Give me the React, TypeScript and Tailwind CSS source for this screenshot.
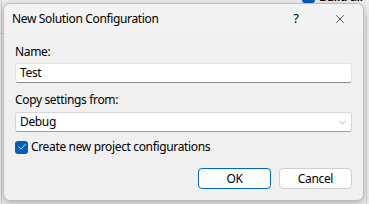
import { Check, ChevronDown, X } from 'lucide-react';

const font = { fontFamily: '"Noto Sans", "Open Sans", sans-serif' };

export default function App() {
    return (
        <div className="relative h-[204px] w-[369px] overflow-hidden bg-[#ebebeb] text-[12px] tracking-[-0.35px] text-black" style={font}>
            {/* window behind the dialog */}
            <div className="absolute left-[1px] top-0 h-full w-px bg-[#c9c9c9]" />
            <div className="absolute left-0 top-[33px] h-px w-[4px] bg-[#c9c9c9]" />
            <div className="absolute right-[2px] top-[16px] h-full w-px bg-[#d4d4d4]" />
            <div className="absolute -top-[10px] left-[302px] flex items-center gap-[4px]">
                <div className="size-[13px] rounded-[3px] bg-[#005fb8]" />
                <span className="leading-[13px] font-semibold">Build all</span>
            </div>

            {/* dialog */}
            <div className="absolute left-[3px] top-[3px] flex h-[198px] w-[361px] flex-col rounded-[7px] border border-[#bdbdbd] bg-[#f0f0f0] shadow-[0_2px_6px_rgba(0,0,0,0.25)]">
                <div className="flex h-[29px] shrink-0 items-center rounded-t-[7px] bg-[#f3f3f3] pl-[8px]">
                    <span className="flex-1">New Solution Configuration</span>
                    <span className="w-[46px] pl-[4px] text-center text-[13px]">?</span>
                    <div className="flex w-[46px] justify-center">
                        <X size={14} strokeWidth={1.1} />
                    </div>
                </div>

                <div className="flex flex-col px-[11px] pt-[11px]">
                    <label className="leading-[16px]">Name:</label>
                    <div className="mt-[3px] flex h-[20px] items-center rounded-[3px] border border-[#e3e3e3] border-b-[#8a8a8a] bg-white px-[4px]">
                        Test
                    </div>

                    <label className="mt-[9px] leading-[16px]">Copy settings from:</label>
                    <div className="mt-[4px] flex h-[20px] items-center justify-between rounded-[3px] border border-[#d6d6d6] border-b-[#a0a0a0] bg-white pl-[4px] pr-[3px]">
                        <span>Debug</span>
                        <ChevronDown size={11} strokeWidth={1.1} className="text-[#606060]" />
                    </div>

                    <div className="mt-[7px] flex items-center gap-[3px]">
                        <div className="flex size-[13px] items-center justify-center rounded-[3px] bg-[#005fb8]">
                            <Check size={10} strokeWidth={2} className="text-white" />
                        </div>
                        <span className="leading-[16px]">Create new project configurations</span>
                    </div>

                    <div className="mt-[13px] flex justify-end gap-[8px]">
                        <button className="h-[21px] w-[73px] rounded-[4px] border border-[#0067c0] bg-[#fdfdfd]">OK</button>
                        <button className="h-[21px] w-[73px] rounded-[4px] border border-[#d0d0d0] bg-[#fdfdfd]">Cancel</button>
                    </div>
                </div>
            </div>
        </div>
    );
}
